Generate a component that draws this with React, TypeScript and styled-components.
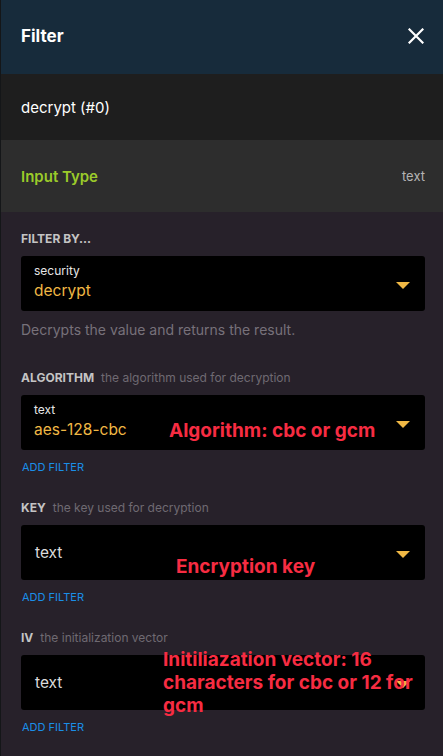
import React from 'react';
import styled, { createGlobalStyle } from 'styled-components';

const GlobalStyle = createGlobalStyle`
  html, body {
    margin: 0;
    padding: 0;
    background: #27212a;
  }
  body {
    font-family: Inter, "Noto Sans", "Liberation Sans", sans-serif;
    -webkit-font-smoothing: antialiased;
  }
`;

const Page = styled.div`
  display: flex;
  min-height: 756px;
  width: 443px;
  background: #141618;
`;

const Panel = styled.div`
  flex: 1;
  margin-left: 1px;
  display: flex;
  flex-direction: column;
  background: #27212a;
`;

const Header = styled.header`
  height: 74px;
  display: flex;
  align-items: center;
  justify-content: space-between;
  padding: 0 18px 2px 20px;
  box-sizing: border-box;
  background: #172b3b;
`;

const Title = styled.h1`
  margin: 0;
  font-size: 17px;
  font-weight: 700;
  color: #ffffff;
`;

const CloseButton = styled.button`
  display: flex;
  align-items: center;
  justify-content: center;
  padding: 0;
  width: 18px;
  height: 18px;
  background: none;
  border: none;
  color: #ffffff;
  cursor: pointer;
`;

const InfoRow = styled.div<{ $tone: 'dark' | 'mid' }>`
  display: flex;
  align-items: center;
  justify-content: space-between;
  padding: 0 18px 0 20px;
  height: ${p => (p.$tone === 'dark' ? '66px' : '72px')};
  background: ${p => (p.$tone === 'dark' ? '#1e1e1e' : '#2d2d2d')};
`;

const RowTitle = styled.span<{ $accent?: boolean }>`
  font-size: 15px;
  font-weight: ${p => (p.$accent ? 600 : 400)};
  color: ${p => (p.$accent ? '#9bcb2a' : '#ffffff')};
`;

const RowValue = styled.span`
  font-size: 13px;
  color: #b4b4b4;
`;

const Body = styled.div`
  display: flex;
  flex-direction: column;
  padding: 20px 18px 0 20px;
`;

const Section = styled.section<{ $gap: number }>`
  display: flex;
  flex-direction: column;
  margin-bottom: ${p => p.$gap}px;
`;

const SectionLabel = styled.div`
  display: flex;
  align-items: baseline;
  gap: 7px;
  margin-bottom: 10px;
  line-height: 14px;
`;

const LabelName = styled.span`
  font-size: 12px;
  font-weight: 700;
  color: #c4c4c4;
  text-transform: uppercase;
`;

const LabelHint = styled.span`
  font-size: 12px;
  color: #6f6a72;
`;

const SelectBox = styled.div`
  position: relative;
  display: flex;
  align-items: center;
  justify-content: space-between;
  height: 55px;
  padding: 0 15px 0 13px;
  background: #000000;
  border-radius: 3px;
  box-sizing: border-box;
`;

const SelectText = styled.div<{ $stacked?: boolean }>`
  display: flex;
  flex-direction: column;
  gap: 3px;
  padding-bottom: ${p => (p.$stacked ? '4px' : '0')};
`;

const SelectCaption = styled.span`
  font-size: 12px;
  color: #e6e6e6;
  line-height: 15px;
`;

const SelectValue = styled.span<{ $plain?: boolean }>`
  font-size: 15.5px;
  line-height: 20px;
  color: ${p => (p.$plain ? '#dcdcdc' : '#f0b845')};
  padding-left: ${p => (p.$plain ? '1px' : '0')};
`;

const Caret = styled.span`
  width: 0;
  height: 0;
  border-left: 7.5px solid transparent;
  border-right: 7.5px solid transparent;
  border-top: 7px solid #f0b845;
  margin-top: 4px;
`;

const Description = styled.p`
  margin: 11px 0 0;
  font-size: 14px;
  line-height: 16px;
  color: #77717a;
`;

const AddFilter = styled.button`
  align-self: flex-start;
  margin-top: 11px;
  padding: 0 0 0 1px;
  background: none;
  border: none;
  font-family: inherit;
  font-size: 11px;
  line-height: 13px;
  color: #1a8fe8;
  text-transform: uppercase;
  cursor: pointer;
`;

const Annotation = styled.div<{ $left: number; $top: number }>`
  position: absolute;
  left: ${p => p.$left}px;
  top: ${p => p.$top}px;
  width: 262px;
  font-size: 19px;
  font-weight: 700;
  line-height: 23px;
  color: #f72c42;
  pointer-events: none;
`;

type Field = {
  name: string;
  hint: string;
  caption?: string;
  value: string;
  note: string;
  noteLeft: number;
  noteTop: number;
};

const fields: Field[] = [
  {
    name: 'Algorithm',
    hint: 'the algorithm used for decryption',
    caption: 'text',
    value: 'aes-128-cbc',
    note: 'Algorithm: cbc or gcm',
    noteLeft: 148,
    noteTop: 24,
  },
  {
    name: 'Key',
    hint: 'the key used for decryption',
    value: 'text',
    note: 'Encryption key',
    noteLeft: 155,
    noteTop: 30,
  },
  {
    name: 'IV',
    hint: 'the initialization vector',
    value: 'text',
    note: 'Initiliazation vector: 16 characters for cbc or 12 for gcm',
    noteLeft: 142,
    noteTop: -7,
  },
];

const CloseIcon = () => (
  <svg width="16" height="16" viewBox="0 0 16 16" fill="none">
    <path d="M1.5 1.5L14.5 14.5M14.5 1.5L1.5 14.5" stroke="currentColor" strokeWidth="2.2" strokeLinecap="square" />
  </svg>
);

const App: React.FC = () => (
  <>
    <GlobalStyle />
    <Page>
      <Panel>
        <Header>
          <Title>Filter</Title>
          <CloseButton aria-label="Close">
            <CloseIcon />
          </CloseButton>
        </Header>

        <InfoRow $tone="dark">
          <RowTitle>decrypt (#0)</RowTitle>
        </InfoRow>

        <InfoRow $tone="mid">
          <RowTitle $accent>Input Type</RowTitle>
          <RowValue>text</RowValue>
        </InfoRow>

        <Body>
          <Section $gap={33}>
            <SectionLabel>
              <LabelName>Filter by...</LabelName>
            </SectionLabel>
            <SelectBox>
              <SelectText $stacked>
                <SelectCaption>security</SelectCaption>
                <SelectValue>decrypt</SelectValue>
              </SelectText>
              <Caret />
            </SelectBox>
            <Description>Decrypts the value and returns the result.</Description>
          </Section>

          {fields.map(f => (
            <Section key={f.name} $gap={27}>
              <SectionLabel>
                <LabelName>{f.name}</LabelName>
                <LabelHint>{f.hint}</LabelHint>
              </SectionLabel>
              <SelectBox>
                <SelectText $stacked={!!f.caption}>
                  {f.caption && <SelectCaption>{f.caption}</SelectCaption>}
                  <SelectValue $plain={!f.caption}>{f.value}</SelectValue>
                </SelectText>
                <Caret />
                <Annotation $left={f.noteLeft} $top={f.noteTop}>
                  {f.note}
                </Annotation>
              </SelectBox>
              <AddFilter>Add filter</AddFilter>
            </Section>
          ))}
        </Body>
      </Panel>
    </Page>
  </>
);

export default App;
